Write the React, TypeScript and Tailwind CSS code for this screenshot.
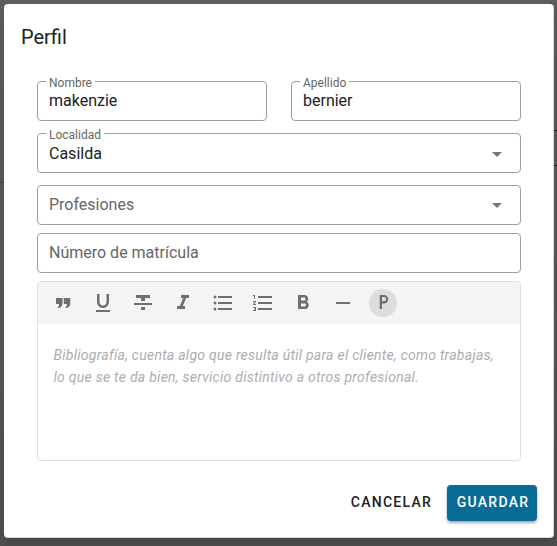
import type { ReactNode } from "react";

function Field({ label, value, placeholder, select, className = "" }: {
  label?: string;
  value?: string;
  placeholder?: string;
  select?: boolean;
  className?: string;
}) {
  return (
    <fieldset className={`min-w-0 rounded-[4px] border border-[#9e9e9e] px-[8px] ${label ? "h-[46px]" : "h-[40px]"} ${className}`}>
      {label && (
        <legend className="h-[12px] px-[3px] text-[12px] leading-[16px] whitespace-nowrap text-[#666]">{label}</legend>
      )}
      <div className={`flex items-center justify-between pr-[3px] pl-[3px] text-[16px] leading-[20px] ${label ? (select ? "mt-[3px] h-[24px]" : "mt-[2px] h-[24px]") : "h-[38px]"} ${value ? "text-[#212121]" : "text-[#666]"}`}>
        <span>{value ?? placeholder}</span>
        {select && (
          <svg width="24" height="24" viewBox="0 0 24 24" fill="#757575" className="shrink-0">
            <path d="M7 10l5 5 5-5z" />
          </svg>
        )}
      </div>
    </fieldset>
  );
}

const icons: ReactNode[] = [
  <path d="M5 7h6.500v5c0 2.500-1 4.500-3.500 5H6.300c1.200-1 1.700-2 1.700-4H5zM12.800 7h6.500v5c0 2.500-1 4.500-3.500 5h-1.700c1.200-1 1.700-2 1.700-4h-3z" />,
  <path d="M12 17c3.310 0 6-2.690 6-6V3h-2.500v8c0 1.930-1.570 3.500-3.500 3.500S8.500 12.930 8.500 11V3H6v8c0 3.310 2.690 6 6 6zM5 19v2h14v-2z" />,
  <path d="M10 19h4v-3h-4zM5 4v3h5v3h4V7h5V4zM3 14h18v-2H3z" />,
  <path d="M10 4v3h2.210l-3.420 8H6v3h8v-3h-2.210l3.420-8H18V4z" />,
  <g>
    <circle cx="4" cy="6" r="1.500" />
    <circle cx="4" cy="12" r="1.500" />
    <circle cx="4" cy="18" r="1.500" />
    <path d="M7 5h14v2H7zM7 11h14v2H7zM7 17h14v2H7z" />
  </g>,
  <path d="M2 17h2v.5H3v1h1v.5H2v1h3v-4H2zM3 8h1V4H2v1h1zM2 11h1.800L2 13.100v.9h3v-1H3.200L5 10.900V10H2zM7 5v2h14V5zM7 19h14v-2H7zM7 13h14v-2H7z" />,
  <path d="M15.600 10.790c.97-.67 1.650-1.770 1.650-2.790 0-2.260-1.750-4-4-4H7v14h7.040c2.090 0 3.710-1.700 3.710-3.790 0-1.520-.86-2.820-2.150-3.420zM10 6.500h3c.83 0 1.500.67 1.500 1.500s-.67 1.500-1.500 1.500h-3zm3.500 9H10v-3h3.500c.83 0 1.500.67 1.500 1.500s-.67 1.500-1.500 1.500z" />,
  <path d="M5 11h14v2H5z" />,
  <path d="M8.700 4h4.300a4.200 4.200 0 0 1 0 8.400h-2v5.600H8.700zm2.300 2.100v4.200h2a2.100 2.100 0 0 0 0-4.200z" />,
];

function Toolbar() {
  return (
    <div className="flex h-[42px] items-center gap-[12px] bg-[#f4f4f4] pl-[11px]">
      {icons.map((icon, i) => (
        <button key={i} className={`flex size-[28px] items-center justify-center rounded-full ${i === 8 ? "bg-[#dddddd]" : ""}`}>
          <svg width="24" height="24" viewBox="0 0 24 24" fill="#6f6f6f">{icon}</svg>
        </button>
      ))}
    </div>
  );
}

export default function App() {
  return (
    <div className="relative h-[546px] w-[557px] overflow-hidden bg-[linear-gradient(to_bottom,#5f5f5f,#5a5958_60%,#505050)] p-[4px] font-[Roboto,sans-serif]">
      {/* edges of the page dimmed behind the dialog */}
      <div className="absolute top-[130px] right-0 h-px w-[4px] bg-[#222]" />
      <div className="absolute top-[165px] right-0 h-px w-[4px] bg-[#222]" />
      <div className="absolute top-[182px] left-0 h-px w-[4px] bg-[#444]" />
      <main className="relative h-[534px] w-[550px] rounded-[4px] border-r border-b border-[#d8d8d8] bg-white pr-[32px] pl-[33px] shadow-[0_8px_16px_rgba(0,0,0,0.15)]">
        <h1 className="-ml-[16px] pt-[17px] text-[20px] leading-[32px] text-[#212121]">Perfil</h1>
        <div className="mt-[22px] flex gap-[24px]">
          <Field label="Nombre" value="makenzie" className="w-[230px]" />
          <Field label="Apellido" value="bernier" className="w-[230px]" />
        </div>
        <Field label="Localidad" value="Casilda" select className="mt-[6px]" />
        <Field placeholder="Profesiones" select className="mt-[12px]" />
        <Field placeholder="Número de matrícula" className="mt-[8px]" />
        <section className="mt-[8px] h-[180px] overflow-hidden rounded-[4px] border border-[#e0e0e0]">
          <Toolbar />
          <p className="pt-[20px] pl-[15.500px] text-[14px] leading-[22px] tracking-[0.260px] whitespace-nowrap text-[#adadad] italic">
            Bibliografía, cuenta algo que resulta útil para el cliente, como trabajas,
            <br />
            lo que se te da bien, servicio distintivo a otros profesional.
          </p>
        </section>
        <footer className="mt-[24px] -mr-[16px] flex justify-end gap-[5px] text-[14px] font-medium tracking-[1.250px]">
          <button className="h-[36px] px-[10px] pb-[2px] text-[#212121]">CANCELAR</button>
          <button className="h-[36px] w-[90px] rounded-[4px] bg-[#086c96] pb-[2px] pl-[2px] text-white shadow-[0_2px_3px_rgba(0,0,0,0.35)]">GUARDAR</button>
        </footer>
      </main>
    </div>
  );
}
